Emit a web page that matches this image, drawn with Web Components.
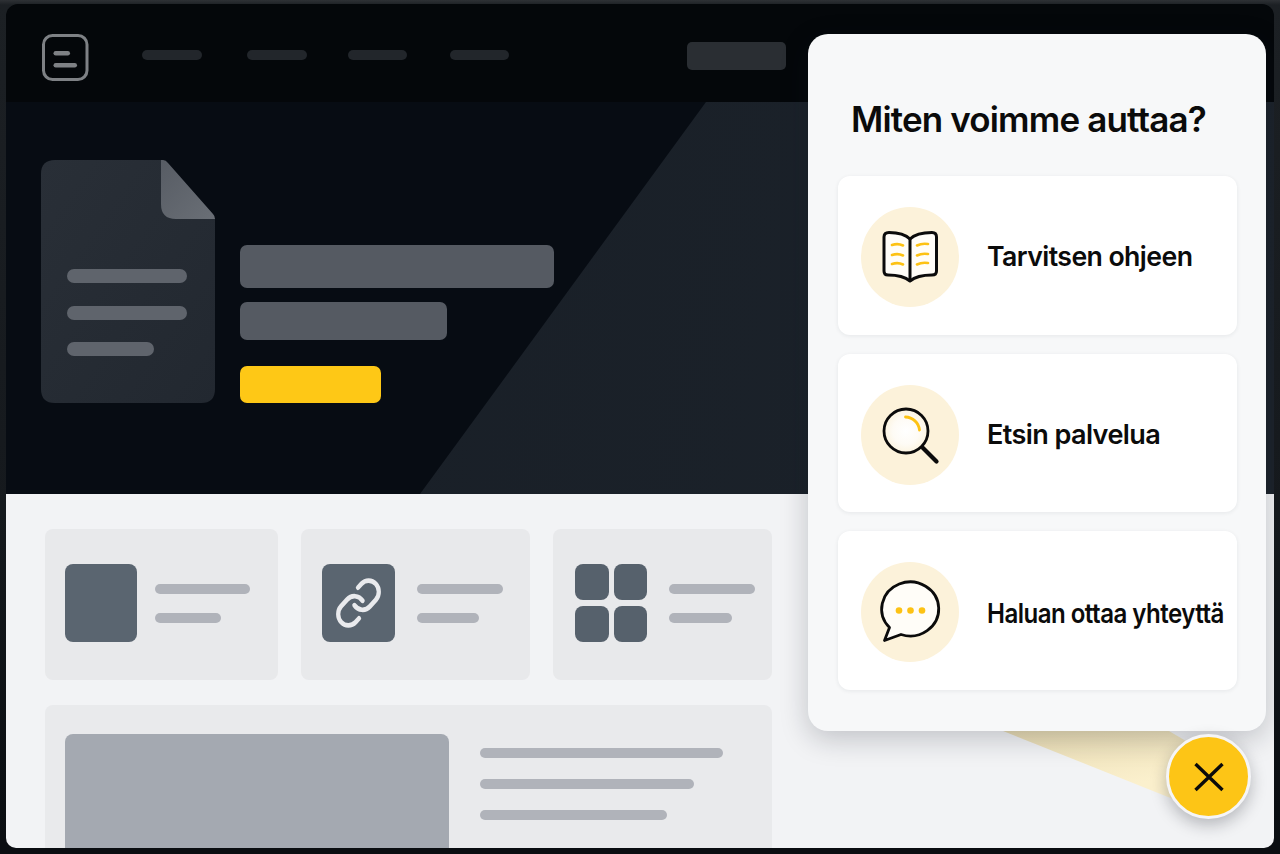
<!DOCTYPE html>
<html lang="fi"><head><meta charset="utf-8"><title>Miten voimme auttaa?</title>
<style>
html,body{margin:0;height:100%}
body{background:linear-gradient(180deg,#2e3135 0,#1c2024 5px,#15191d 60%,#0a0d11 98%);padding:4px 6px 6px;box-sizing:border-box;height:854px;overflow:hidden;font-family:Inter,"Liberation Sans",sans-serif}
</style></head><body>
<app-frame>
  <top-bar></top-bar>
  <hero-section></hero-section>
  <content-section></content-section>
  <help-beam></help-beam>
  <help-popup heading="Miten voimme auttaa?">
    <help-option label="Tarvitsen ohjeen" sx=".97" dy="1"><svg viewBox="0 0 98 98" fill="none" stroke-linecap="round" stroke-linejoin="round"><path d="M49 32C44 27 36 25.5 28 25.5Q23 25.5 23 30V64Q23 68 27 68C35 68 43 69 49 74C55 69 63 68 71 68Q75.5 68 75.5 64V30Q75.5 25.5 71 25.5C63 25.5 54 27 49 32Z" fill="#fffdf8" stroke="#0b0b0b" stroke-width="3"/><path d="M49 32V73" stroke="#0b0b0b" stroke-width="3"/><path d="M31 38Q37 36 42 38.5M31 48Q37 46 42 48.5M31 57Q37 55 42 57.5M56 38.5Q61 36 67 37M56 48.5Q61 46 67 47M56 57.5Q61 55 67 56" stroke="#fdc214" stroke-width="2.6"/></svg></help-option>
    <help-option label="Etsin palvelua" sx=".983" dy="1"><svg viewBox="0 0 98 98" fill="none" stroke-linecap="round"><defs><radialGradient id="g"><stop offset="0" stop-color="#fff"/><stop offset=".6" stop-color="#fefbf5"/><stop offset="1" stop-color="#fcf4e0"/></radialGradient></defs><circle cx="45" cy="46" r="22" fill="url(#g)" stroke="#0b0b0b" stroke-width="2.8"/><path d="M62 63L75.5 76.5" stroke="#0b0b0b" stroke-width="4.2"/><path d="M44.5 32A14.5 14.5 0 0 1 58.5 45" stroke="#fdc214" stroke-width="2.8"/></svg></help-option>
    <help-option label="Haluan ottaa yhteyttä" sx=".875" dy="4"><svg viewBox="0 0 98 98" fill="none" stroke-linecap="round" stroke-linejoin="round"><g transform="translate(0 1.5)"><path d="M40 71A28.5 27 0 1 0 28.5 64L23.5 77Z" fill="#fffdf8" stroke="#0b0b0b" stroke-width="2.8"/><circle cx="38" cy="47" r="3.3" fill="#fdc214"/><circle cx="49.5" cy="47" r="3.3" fill="#fdc214"/><circle cx="61" cy="47" r="3.3" fill="#fdc214"/></g></svg></help-option>
  </help-popup>
  <close-fab></close-fab>
</app-frame>
<script>
function def(name, html){
  customElements.define(name, class extends HTMLElement{
    constructor(){super();this.attachShadow({mode:'open'});if(typeof html!=='function')this.shadowRoot.innerHTML=html;}
    connectedCallback(){ if(typeof html==='function'&&!this._r){this._r=1;this.shadowRoot.innerHTML=html(this);} }
  });
}
def('skel-bar',el=>{
  const a=n=>el.getAttribute(n);
  return `<style>:host{display:block;flex:none;width:${a('w')}px;height:${a('h')}px;background:${a('c')};border-radius:${a('r')||5}px}</style>`;
});
def('app-frame',`<style>:host{display:flex;flex-direction:column;position:relative;height:844px;border-radius:12px 12px 10px 10px;overflow:hidden}</style><slot></slot>`);
def('top-bar',`<style>
:host{display:flex;align-items:flex-start;height:98px;background:#04070a;box-sizing:border-box;padding:30px 0 0 36px;flex:none}
svg{width:47px;height:47px;flex:none}
nav{display:flex;margin:16px 0 0 53px}
.btn{margin:8px 0 0 178px}
</style>
<svg viewBox="0 0 47 47" fill="none"><rect x="1.5" y="1.5" width="43.5" height="44" rx="9" stroke="#7e8185" stroke-width="3"/><rect x="11.5" y="17" width="16.5" height="4.4" rx="2.2" fill="#7e8185"/><rect x="11.5" y="29" width="23.5" height="4.4" rx="2.2" fill="#7e8185"/></svg>
<nav><skel-bar w="60" h="10" c="#22262b"></skel-bar><skel-bar style="margin-left:45px" w="60" h="10" c="#22262b"></skel-bar><skel-bar style="margin-left:41px" w="59" h="10" c="#22262b"></skel-bar><skel-bar style="margin-left:43px" w="59" h="10" c="#22262b"></skel-bar></nav>
<skel-bar class="btn" w="99" h="28" c="#2a2e33" r="5"></skel-bar>`);
def('hero-section',`<style>
:host{display:flex;align-items:flex-end;position:relative;height:392px;background:#070c13;box-sizing:border-box;padding:0 0 91px 35px;flex:none;overflow:hidden}
.tri{position:absolute;inset:0;background:linear-gradient(100deg,#181e26,#1c232b);clip-path:polygon(414px 392px,700px 0,100% 0,100% 392px)}
svg{position:relative;width:174px;height:243px;flex:none}
.col{position:relative;display:flex;flex-direction:column;margin-left:25px}
</style>
<div class="tri"></div>
<svg viewBox="0 0 174 243"><defs><linearGradient id="d" x1="0" y1="0" x2="1" y2="1"><stop offset="0" stop-color="#292f37"/><stop offset="1" stop-color="#222830"/></linearGradient><linearGradient id="f" x1="0" y1="0" x2="1" y2="1"><stop offset="0" stop-color="#575c64"/><stop offset="1" stop-color="#6a6f76"/></linearGradient></defs>
<path d="M14 0H122L174 59V229Q174 243 160 243H14Q0 243 0 229V14Q0 0 14 0Z" fill="url(#d)"/>
<path d="M120 0H122Q125 0 127 3L172 54Q174 56 174 59H135Q120 59 120 44Z" fill="url(#f)"/>
<rect x="26" y="109" width="120" height="14" rx="7" fill="#5f646c"/><rect x="26" y="146" width="120" height="14" rx="7" fill="#5f646c"/><rect x="26" y="182" width="87" height="14" rx="7" fill="#5f646c"/></svg>
<div class="col"><skel-bar w="314" h="43" c="#555a62" r="7"></skel-bar><skel-bar style="margin-top:14px" w="207" h="38" c="#555a62" r="7"></skel-bar><skel-bar style="margin-top:26px" w="141" h="37" c="#fec816" r="7"></skel-bar></div>`);
def('tile-card',el=>{
  const a=n=>el.getAttribute(n);
  return `<style>
:host{display:flex;align-items:flex-start;background:#e8e9eb;border-radius:8px;box-sizing:border-box;padding:35px 0 0 ${a('pad')}px}
.ic{width:${a('iw')}px;height:78px;flex:none}
.l{display:flex;flex-direction:column;gap:19px;margin:20px 0 0 ${a('gap')}px}
</style><div class="ic"><slot></slot></div><div class="l"><skel-bar w="${a('a')}" h="10" c="#b0b3ba"></skel-bar><skel-bar w="${a('b')}" h="10" c="#b0b3ba"></skel-bar></div>`;
});
def('icon-square',`<style>:host{display:flex;align-items:center;justify-content:center;width:100%;height:100%;background:#5a6570;border-radius:8px}</style><slot></slot>`);
def('icon-grid',`<style>:host{display:grid;grid-template-columns:1fr 1fr;gap:6px 5px;width:100%;height:100%}i{background:#56616c;border-radius:8px}</style><i></i><i></i><i></i><i></i>`);
def('feature-card',`<style>
:host{display:flex;align-items:flex-start;background:#e9eaec;border-radius:8px 8px 0 0;height:143px;box-sizing:border-box;padding:29px 0 0 20px;overflow:hidden;flex:none}
.img{width:384px;height:114px;background:#a4a9b1;border-radius:8px 8px 0 0;flex:none}
.l{display:flex;flex-direction:column;gap:21px;margin:14px 0 0 31px}
</style><div class="img"></div><div class="l"><skel-bar w="243" h="10" c="#b0b3ba"></skel-bar><skel-bar w="214" h="10" c="#b0b3ba"></skel-bar><skel-bar w="187" h="10" c="#b0b3ba"></skel-bar></div>`);
def('content-section',`<style>
:host{display:flex;flex-direction:column;flex:1;background:#f2f3f5;box-sizing:border-box;padding:35px 0 0 39px;gap:25px;min-height:0;width:100%}
.row{display:grid;grid-template-columns:233px 229px 219px;gap:23px;height:151px;width:727px;flex:none}
feature-card{width:727px}
</style>
<div class="row">
<tile-card pad="20" iw="72" gap="18" a="95" b="66"><icon-square></icon-square></tile-card>
<tile-card pad="21" iw="73" gap="22" a="86" b="62"><icon-square><svg width="49" height="54" viewBox="0 0 24 24" fill="none" stroke="#e9eaed" stroke-width="2.1" stroke-linecap="round" stroke-linejoin="round" preserveAspectRatio="none"><path d="M10 13a5 5 0 0 0 7.54.54l3-3a5 5 0 0 0-7.07-7.07l-1.72 1.71"/><path d="M14 11a5 5 0 0 0-7.54-.54l-3 3a5 5 0 0 0 7.07 7.07l1.71-1.71"/></svg></icon-square></tile-card>
<tile-card pad="22" iw="72" gap="22" a="86" b="63"><icon-grid></icon-grid></tile-card>
</div>
<feature-card></feature-card>`);
def('help-beam',`<style>:host{position:absolute;left:990px;top:720px;width:200px;height:85px;background:linear-gradient(170deg,#e6d9b0,#fbf0cd 70%);clip-path:polygon(7px 7px,173px 7px,195px 20px,177px 75px)}</style>`);
def('help-option',el=>`<style>
:host{display:flex;align-items:center;height:158.7px;background:#fff;border-radius:12px;box-shadow:0 1px 4px rgba(30,35,45,.08);box-sizing:border-box;padding-left:23px;flex:none}
.c{width:98px;height:100px;margin-top:3px;border-radius:50%;background:#fcf2da;flex:none}
::slotted(svg){display:block;width:98px;height:98px}
span{display:inline-block;margin:${el.getAttribute('dy')}px 0 0 28px;font-weight:600;font-size:27.5px;letter-spacing:-.6px;color:#0b0b0b;white-space:nowrap;transform:scaleX(${el.getAttribute('sx')});transform-origin:0 50%}
</style><div class="c"><slot></slot></div><span>${el.getAttribute('label')}</span>`);
def('help-popup',el=>`<style>
:host{position:absolute;left:802px;top:30px;width:458px;height:697px;background:#f7f8f9;border-radius:20px;box-shadow:0 8px 28px rgba(20,25,35,.22);box-sizing:border-box;padding:0 29px 0 30px;display:flex;flex-direction:column}
h2{margin:64px 0 35px 13px;font-weight:600;font-size:35px;line-height:43px;letter-spacing:-.85px;color:#0b0b0b;white-space:nowrap}
.o{display:flex;flex-direction:column;gap:19px}
</style><h2>${el.getAttribute('heading')}</h2><div class="o"><slot></slot></div>`);
def('close-fab',`<style>
:host{position:absolute;left:1160px;top:730px;width:85px;height:85px;box-sizing:border-box;border-radius:50%;background:#fdc516;border:3px solid #f5f5f7;box-shadow:0 6px 16px rgba(20,25,35,.28);display:flex;align-items:center;justify-content:center}
svg{width:34px;height:34px}
</style><svg viewBox="0 0 34 34" fill="none" stroke="#0b0b0b" stroke-width="3.4"><path d="M3.5 4L30.5 30M30.5 4L3.5 30"/></svg>`);
</script>
</body></html>
